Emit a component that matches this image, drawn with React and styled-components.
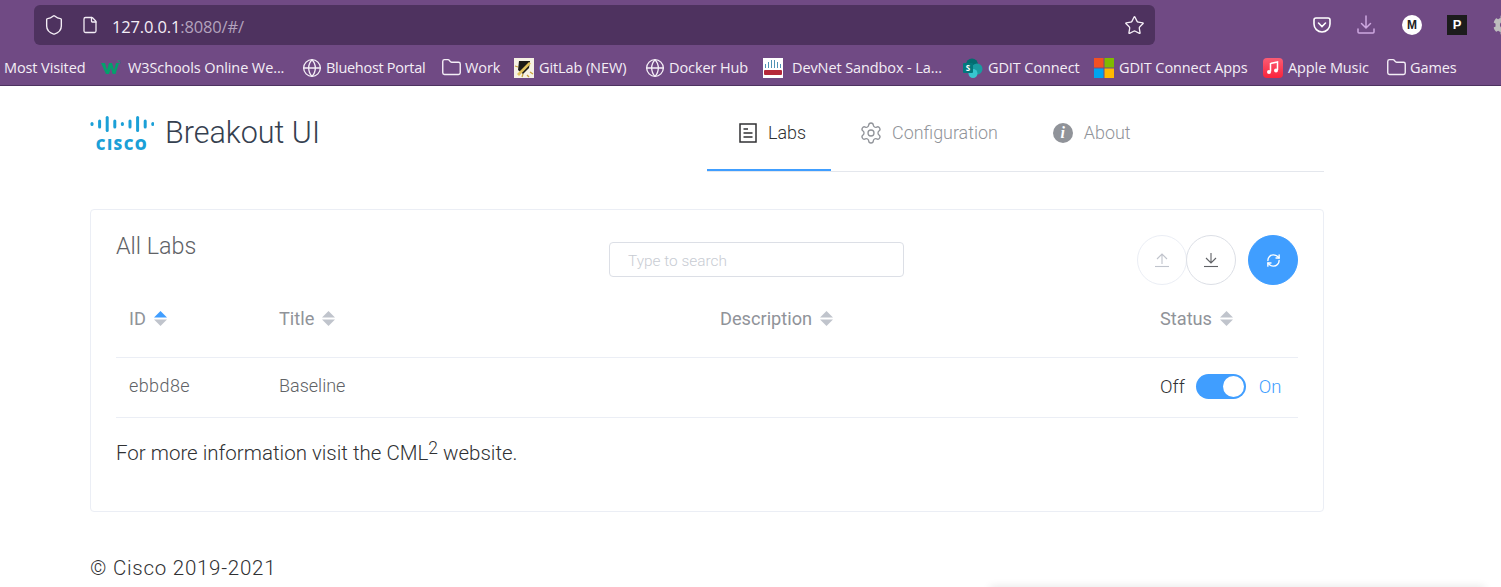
import React from 'react'
import styled, { createGlobalStyle } from 'styled-components'
import { Shield, File, Star, Globe, Folder, RefreshCw, Settings } from 'lucide-react'
import { FaCog } from 'react-icons/fa'

const GlobalStyle = createGlobalStyle`
  html, body {
    margin: 0;
    height: 587px;
    overflow: hidden;
    background: #fff;
    font-family: Roboto, "Liberation Sans", sans-serif;
  }
  * {
    box-sizing: border-box;
  }
`

const bookmarks = [
  { kind: 'none', label: 'Most Visited', width: 97 },
  { kind: 'w3', label: 'W3Schools Online We...', width: 201, gap: 7 },
  { kind: 'globe', label: 'Bluehost Portal', width: 139, gap: 4, tight: true },
  { kind: 'folder', label: 'Work', width: 73, gap: 3 },
  { kind: 'gitlab', label: 'GitLab (NEW)', width: 131 },
  { kind: 'globe', label: 'Docker Hub', width: 118, gap: 4 },
  { kind: 'cisco', label: 'DevNet Sandbox - La...', width: 200, gap: 9 },
  { kind: 'share', label: 'GDIT Connect', width: 131 },
  { kind: 'ms', label: 'GDIT Connect Apps', width: 169 },
  { kind: 'music', label: 'Apple Music', width: 123 },
  { kind: 'folder', label: 'Games', width: 80, gap: 3 },
]

function CiscoBars() {
  const bars = [4, 9, 16, 9, 4, 9, 16, 9, 4]
  return (
    <svg width='64' height='18' viewBox='0 0 64 18'>
      {bars.map((h, i) => (
        <rect key={i} x={0.5 + i * 7.6} y={9 - h / 2} width='3' height={h} rx='1.5' fill='#1ba0d7' />
      ))}
    </svg>
  )
}

function BookmarkIcon({ kind }) {
  if (kind === 'none') return null
  if (kind === 'globe') return <Globe size={20} strokeWidth={1.6} color='#f4eef6' />
  if (kind === 'folder') return <Folder size={21} strokeWidth={1.6} color='#f4eef6' />
  if (kind === 'w3') {
    return (
      <svg width='20' height='20' viewBox='0 0 20 20'>
        <path d='M0 5h4l2 7 2-7h3l2 7 2-7h3l-3.500 11h-3L10 9.500 8 16H5z' fill='#04a06c' />
        <text x='16' y='6' fontSize='6' fill='#04a06c' fontFamily='Open Sans'>3</text>
      </svg>
    )
  }
  if (kind === 'gitlab') {
    return (
      <svg width='20' height='20' viewBox='0 0 20 20'>
        <rect width='20' height='20' fill='#f6f1e4' />
        <path d='M5 3h11l-1 7-6 6-5-4z' fill='#1d1b16' />
        <path d='M3 16L15 4l2 1.500L5 18z' fill='#e2c25c' />
        <path d='M1 8l3 1M8 19l1-3M16 14l3 2M13 17l2 2' stroke='#c9a23c' strokeWidth='1.300' />
      </svg>
    )
  }
  if (kind === 'cisco') {
    return (
      <svg width='20' height='20' viewBox='0 0 20 20'>
        <rect width='20' height='20' fill='#fff' />
        <g fill='#4f93b5'>
          <rect x='2' y='6' width='1' height='4' />
          <rect x='5' y='4' width='1' height='6' />
          <rect x='8' y='2' width='1' height='8' />
          <rect x='11' y='2' width='1' height='8' />
          <rect x='14' y='4' width='1' height='6' />
          <rect x='17' y='6' width='1' height='4' />
        </g>
        <rect x='1' y='12' width='18' height='5' rx='1' fill='#b5283a' />
      </svg>
    )
  }
  if (kind === 'share') {
    return (
      <svg width='20' height='20' viewBox='0 0 20 20'>
        <circle cx='9' cy='6.500' r='6' fill='#036c70' />
        <circle cx='14' cy='11' r='5.500' fill='#1a9ba1' />
        <circle cx='10' cy='15.500' r='4.500' fill='#37c6d0' />
        <rect x='0' y='5' width='10' height='10' rx='1' fill='#03787c' />
        <text x='5' y='13' fontSize='8' fontWeight='700' textAnchor='middle' fill='#fff' fontFamily='Open Sans'>S</text>
      </svg>
    )
  }
  if (kind === 'ms') {
    return (
      <svg width='20' height='20' viewBox='0 0 20 20'>
        <rect width='9.500' height='9.500' fill='#f25022' />
        <rect x='10.500' width='9.500' height='9.500' fill='#7fba00' />
        <rect y='10.500' width='9.500' height='9.500' fill='#00a4ef' />
        <rect x='10.500' y='10.500' width='9.500' height='9.500' fill='#ffb900' />
      </svg>
    )
  }
  return (
    <svg width='20' height='20' viewBox='0 0 20 20'>
      <defs>
        <linearGradient id='music' x1='0' y1='0' x2='0' y2='1'>
          <stop offset='0' stopColor='#fb5c74' />
          <stop offset='1' stopColor='#fa233b' />
        </linearGradient>
      </defs>
      <rect width='20' height='20' rx='4' fill='url(#music)' />
      <path d='M7.500 13.500V5.500l7-1.500v8' fill='none' stroke='#fff' strokeWidth='1.500' />
      <circle cx='6' cy='14' r='2' fill='#fff' />
      <circle cx='13' cy='12.500' r='2' fill='#fff' />
    </svg>
  )
}

function SortCaret({ active }) {
  return (
    <svg width='13' height='15' viewBox='0 0 13 15'>
      <path d='M6.500 0l6.500 6.500H0z' fill={active ? '#409eff' : '#c0c4cc'} />
      <path d='M6.500 15l6.500-6.500H0z' fill='#c0c4cc' />
    </svg>
  )
}

function TransferIcon({ up, color }) {
  return (
    <svg width='16' height='16' viewBox='0 0 16 16' fill='none' stroke={color} strokeWidth='1.100'>
      <path d={up ? 'M8 12V2M3 7l5-5 5 5' : 'M8 1v10M3 6l5 5 5-5'} />
      <path d='M1 14.500h14' />
    </svg>
  )
}

export default function App() {
  return (
    <>
      <GlobalStyle />
      <Browser>
        <Toolbar>
          <UrlBar>
            <Shield size={22} strokeWidth={1.5} color='#f4eef6' />
            <File size={18} strokeWidth={1.7} color='#f4eef6' />
            <Url>
              127.0.0.1<span>:8080/#/</span>
            </Url>
            <StarBtn>
              <Star size={21} strokeWidth={1.5} color='#f4eef6' />
            </StarBtn>
          </UrlBar>
          <Extensions>
            <svg width='18' height='16' viewBox='0 0 18 16'>
              <path d='M1 3a2 2 0 0 1 2-2h12a2 2 0 0 1 2 2v4a8 8 0 0 1-16 0z' fill='none' stroke='#fff' strokeWidth='1.600' />
              <path d='M5.500 6L9 9.500 12.500 6' fill='none' stroke='#fff' strokeWidth='1.600' strokeLinecap='round' />
            </svg>
            <svg width='18' height='20' viewBox='0 0 18 20'>
              <path d='M9 1v12M4.500 8.500L9 13l4.500-4.500M1 14v3a1 1 0 0 0 1 1h14a1 1 0 0 0 1-1v-3' fill='none' stroke='#cda8e0' strokeWidth='1.500' strokeLinecap='round' />
            </svg>
            <Badge>M</Badge>
            <SquareBadge>P</SquareBadge>
            <GearEdge>
              <FaCog size={20} color='#bdbdbd' />
            </GearEdge>
          </Extensions>
        </Toolbar>
        <BookmarkBar>
          {bookmarks.map((b, i) => (
            <Bookmark key={i} $gap={b.gap} $width={b.width} $tight={b.tight}>
              <BookmarkIcon kind={b.kind} />
              <span>{b.label}</span>
            </Bookmark>
          ))}
        </BookmarkBar>
      </Browser>
      <Page>
        <Header>
          <Brand>
            <LogoMark>
              <CiscoBars />
              <LogoWord>CISCO</LogoWord>
            </LogoMark>
            <BrandTitle>Breakout UI</BrandTitle>
          </Brand>
          <Tabs>
            <Tab $active $first>
              <svg width='18' height='20' viewBox='0 0 18 20'>
                <rect x='1' y='1' width='16' height='18' fill='none' stroke='#303133' strokeWidth='1.500' />
                <path d='M4.500 6H9M4.500 10h9M4.500 14h9' stroke='#303133' strokeWidth='1.500' />
              </svg>
              Labs
            </Tab>
            <Tab>
              <GearIcon size={24} strokeWidth={1.3} color='#909399' />
              Configuration
            </Tab>
            <Tab>
              <InfoDot>i</InfoDot>
              About
            </Tab>
          </Tabs>
        </Header>
        <Card>
          <CardHead>
            <CardTitle>All Labs</CardTitle>
            <Search placeholder='Type to search' />
            <Actions>
              <RoundBtn $faded>
                <TransferIcon up color='#c0c4cc' />
              </RoundBtn>
              <RoundBtn>
                <TransferIcon color='#606266' />
              </RoundBtn>
              <RoundBtn $primary>
                <RefreshCw size={15} strokeWidth={2.2} color='#fff' />
              </RoundBtn>
            </Actions>
          </CardHead>
          <HeadRow>
            <HeadCell>
              ID <SortCaret active />
            </HeadCell>
            <HeadCell>
              Title <SortCaret />
            </HeadCell>
            <HeadCell>
              Description <SortCaret />
            </HeadCell>
            <HeadCell>
              Status <SortCaret />
            </HeadCell>
          </HeadRow>
          <BodyRow>
            <Cell $wide>ebbd8e</Cell>
            <Cell>Baseline</Cell>
            <Cell />
            <Cell>
              <SwitchWrap>
                <OffLabel>Off</OffLabel>
                <Track>
                  <Knob />
                </Track>
                <OnLabel>On</OnLabel>
              </SwitchWrap>
            </Cell>
          </BodyRow>
          <Info>
            For more information visit the CML<sup>2</sup> website.
          </Info>
        </Card>
        <Footer>© Cisco 2019-2021</Footer>
      </Page>
      <EdgeShadow />
    </>
  )
}

const Browser = styled.div`
  background: #704a84;
  border-bottom: 1px solid #4d3260;
  font-family: "Open Sans", sans-serif;
  color: #f4eef6;
`
const Toolbar = styled.div`
  display: flex;
  align-items: center;
  height: 50px;
  padding-left: 34px;
`
const UrlBar = styled.div`
  display: flex;
  flex-shrink: 0;
  align-items: center;
  width: 1121px;
  height: 40px;
  background: #4e325f;
  border-radius: 6px;
  padding: 0 10px 0 9px;
  gap: 16px;
`
const Url = styled.div`
  font-size: 16.5px;
  letter-spacing: -0.15px;
  margin-left: -3px;
  padding-top: 3px;
  span {
    color: #b3a2bd;
  }
`
const StarBtn = styled.div`
  margin-left: auto;
  display: flex;
`
const Extensions = styled.div`
  display: flex;
  flex-shrink: 0;
  align-items: center;
  margin-left: 158px;
  gap: 26px;
`
const Badge = styled.div`
  width: 20px;
  height: 20px;
  margin-left: 1px;
  border-radius: 50%;
  background: #fff;
  color: #222;
  font: 700 12px/20px "Liberation Sans", sans-serif;
  text-align: center;
`
const SquareBadge = styled.div`
  width: 20px;
  height: 20px;
  margin-left: -1px;
  background: #1c1c1c;
  color: #fff;
  font: 700 13px/20px "Liberation Sans", sans-serif;
  text-align: center;
`
const GearEdge = styled.div`
  display: flex;
`
const BookmarkBar = styled.div`
  display: flex;
  align-items: center;
  height: 35px;
  padding-left: 4px;
  white-space: nowrap;
  overflow: hidden;
`
const Bookmark = styled.div`
  display: flex;
  flex: 0 0 ${props => props.$width}px;
  align-items: center;
  gap: ${props => props.$gap || 5}px;
  font-size: 14.5px;
  letter-spacing: ${props => (props.$tight ? '-0.3px' : '-0.1px')};
`
const Page = styled.div`
  padding: 0 177px 0 90px;
  color: #303133;
`
const Header = styled.div`
  display: flex;
  justify-content: space-between;
  height: 86px;
`
const Brand = styled.div`
  display: flex;
  align-items: flex-start;
  padding-top: 31px;
  gap: 11px;
`
const LogoMark = styled.div`
  display: flex;
  flex-direction: column;
  align-items: center;
  width: 64px;
  margin-top: -2px;
`
const LogoWord = styled.div`
  margin-top: 3px;
  font: 800 15px/16px "Open Sans", sans-serif;
  color: #1ba0d7;
  letter-spacing: 1.4px;
`
const BrandTitle = styled.div`
  font-size: 30.5px;
  font-weight: 300;
  line-height: 32px;
  color: #35404f;
`
const Tabs = styled.div`
  display: flex;
  align-items: flex-start;
  width: 617px;
  height: 86px;
  border-bottom: 1px solid #e4e7ed;
`
const Tab = styled.div`
  display: flex;
  align-items: center;
  gap: 11px;
  height: 85px;
  padding: 10px 25px 0 ${props => (props.$first ? '32px' : '30px')};
  font-size: 17.9px;
  font-weight: 300;
  color: ${props => (props.$active ? '#303133' : '#909399')};
  border-bottom: 2px solid ${props => (props.$active ? '#409eff' : 'transparent')};
`
const GearIcon = styled(Settings)`
  margin: 0 -2px;
`
const InfoDot = styled.span`
  width: 20px;
  height: 20px;
  border-radius: 50%;
  background: #909399;
  color: #fff;
  font: italic 700 16px/20px "Liberation Serif", serif;
  text-align: center;
`
const Card = styled.div`
  margin-top: 37px;
  height: 303px;
  padding: 25px;
  border: 1px solid #ebeef5;
  border-radius: 4px;
`
const CardHead = styled.div`
  display: flex;
  align-items: flex-start;
  height: 50px;
`
const CardTitle = styled.div`
  width: 493px;
  font-size: 23.3px;
  font-weight: 300;
  line-height: 22px;
  color: #606266;
`
const Search = styled.input`
  width: 295px;
  height: 35px;
  margin-top: 7px;
  padding: 2px 18px 0;
  border: 1px solid #dcdfe6;
  border-radius: 4px;
  outline: none;
  font-family: inherit;
  font-size: 15.4px;
  font-weight: 300;
  &::placeholder {
    color: #c8ccd3;
  }
`
const Actions = styled.div`
  display: flex;
  margin-left: auto;
`
const RoundBtn = styled.div`
  display: flex;
  align-items: center;
  justify-content: center;
  width: 50px;
  height: 50px;
  border-radius: 50%;
  background: ${props => (props.$primary ? '#409eff' : '#fff')};
  border: 1px solid ${props => (props.$primary ? '#409eff' : props.$faded ? '#ebeef5' : '#dcdfe6')};
  margin-left: ${props => (props.$primary ? '12px' : props.$faded ? '0' : '-1px')};
`
const columns = `
  display: grid;
  grid-template-columns: 150px 441px 440px 151px;
`
const HeadRow = styled.div`
  ${columns}
  height: 73px;
  padding-bottom: 6px;
  align-items: center;
  border-bottom: 1px solid #ebeef5;
`
const HeadCell = styled.div`
  display: flex;
  align-items: center;
  gap: 8px;
  padding-left: 13px;
  font-size: 18.2px;
  color: #909399;
`
const BodyRow = styled.div`
  ${columns}
  height: 60px;
  padding-bottom: 2px;
  align-items: center;
  border-bottom: 1px solid #ebeef5;
`
const Cell = styled.div`
  padding: 0 0 2px 13px;
  font-size: 18px;
  font-weight: 300;
  letter-spacing: ${props => (props.$wide ? '0.4px' : '0')};
  color: #606266;
`
const SwitchWrap = styled.div`
  display: flex;
  align-items: center;
  margin-bottom: -2px;
  font-size: 18.5px;
`
const OffLabel = styled.span`
  color: #303133;
`
const OnLabel = styled.span`
  color: #409eff;
`
const Track = styled.div`
  position: relative;
  width: 50px;
  height: 25px;
  margin: 0 13px 0 11px;
  border-radius: 13px;
  background: #409eff;
`
const Knob = styled.div`
  position: absolute;
  top: 2px;
  right: 2px;
  width: 21px;
  height: 21px;
  border-radius: 50%;
  background: #fff;
`
const Info = styled.div`
  margin-top: 21px;
  font-size: 20.5px;
  font-weight: 300;
  line-height: 28px;
  sup {
    font-size: 17.5px;
    line-height: 0;
    vertical-align: 6px;
  }
`
const Footer = styled.div`
  margin-top: 44px;
  font-size: 20.5px;
  font-weight: 300;
  line-height: 24px;
  letter-spacing: 0.75px;
`
const EdgeShadow = styled.div`
  position: fixed;
  left: 990px;
  bottom: -6px;
  width: 495px;
  height: 6px;
  box-shadow: 0 0 8px rgba(0, 0, 0, 0.12);
`
